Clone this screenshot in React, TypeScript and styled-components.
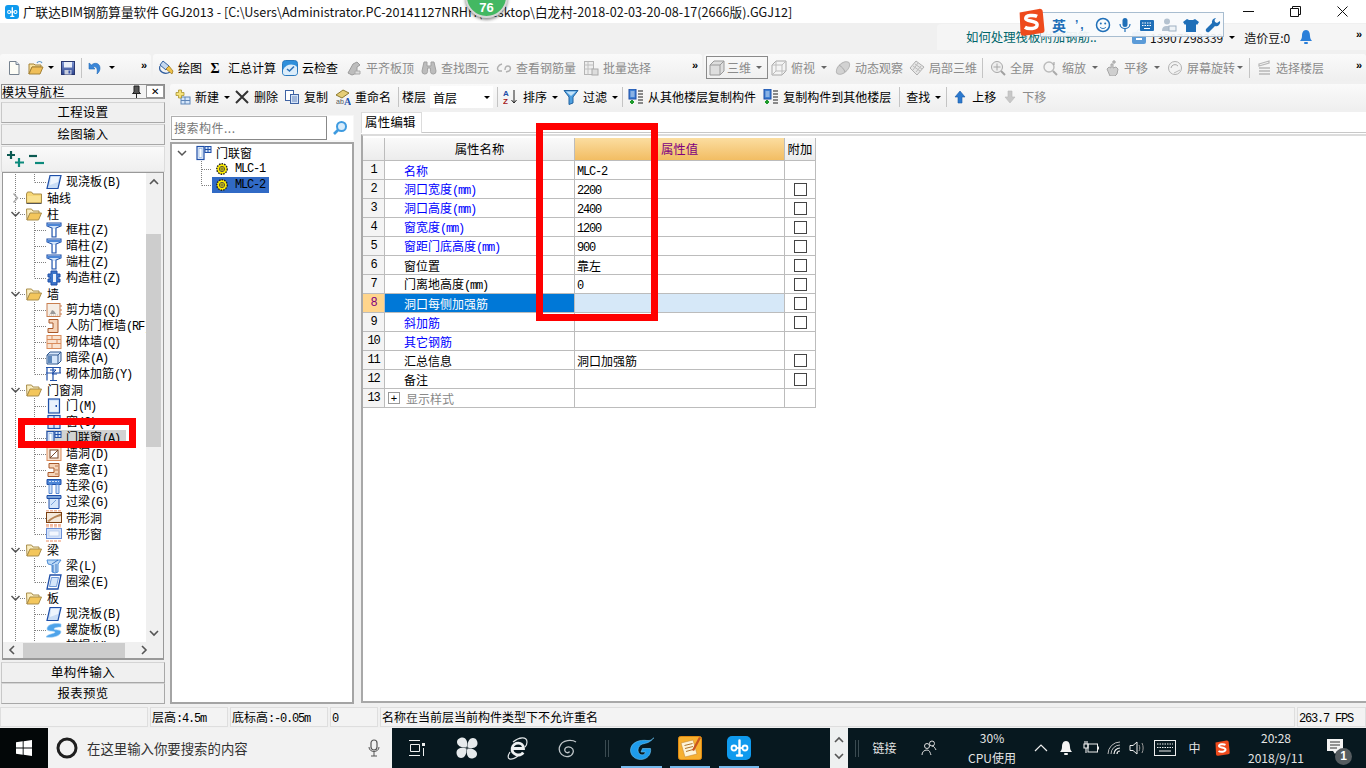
import React from "react";
import styled, { createGlobalStyle } from "styled-components";

const GlobalStyle = createGlobalStyle`
  html, body { margin: 0; padding: 0; width: 1366px; height: 768px; overflow: hidden; background: #f0f0f0; }
  * { box-sizing: border-box; }
  body { font-family: "Noto Sans CJK SC", "Liberation Sans", sans-serif; font-size: 12px; color: #000; }
`;

const Page = styled.div`
  position: relative; width: 1366px; height: 768px; display: flex; flex-direction: column; overflow: hidden;
`;
const TitleBar = styled.div`
  height: 23px; background: #fff; display: flex; align-items: center; padding-left: 5px; flex: none;
`;
const TitleText = styled.div`
  margin-left: 4px; font-size: 12.64px; white-space: nowrap; flex: 1; color: #111; line-height: 23px;
`;
const WinBtn = styled.div`
  width: 46px; height: 23px; display: flex; align-items: center; justify-content: center; flex: none; margin-right: 1px;
`;
const MenuBand = styled.div`
  height: 31px; flex: none; display: flex; justify-content: flex-end; padding-top: 1px;
`;
const InfoPanel = styled.div`
  width: 429px; height: 26px; background: #f5f5f5; border-radius: 4px 0 0 0; display: flex; align-items: center; padding-left: 29px;
`;
const InfoLink = styled.span`color: #00666b; font-size: 12.4px; width: 165px; white-space: nowrap; overflow: hidden;`;
const InfoText = styled.span<{ $ml?: number }>`font-size: 12px; white-space: nowrap; margin-left: ${(p) => p.$ml ?? 0}px; color: #111;`;
const ToolRow = styled.div`
  height: 27px; flex: none; display: flex; gap: 2px;
`;
const ToolPanel = styled.div<{ $w?: number; $pl?: number }>`
  ${(p) => (p.$w ? `width:${p.$w}px; flex:none;` : "flex:1;")}
  padding-left: ${(p) => p.$pl ?? 0}px;
  background: linear-gradient(#fafafa, #efefef); border-radius: 3px; display: flex; align-items: center; height: 27px;
`;
const Tool = styled.div<{ $off?: boolean; $ml?: number }>`
  display: flex; align-items: center; gap: 4px; padding: 0 3px; height: 22px; flex: none; white-space: nowrap;
  margin-left: ${(p) => p.$ml ?? 0}px;
  color: ${(p) => (p.$off ? "#8b8b8b" : "#000")};
  line-height: 22px;
`;
const BoxedTool = styled(Tool)`
  border: 1px solid #8a8a8a; height: 23px; width: 62px; padding: 0 2px; gap: 2px;
`;
const Caret = styled.span<{ $ml?: number; $off?: boolean }>`
  display: inline-block; width: 0; height: 0; border-left: 3px solid transparent; border-right: 3px solid transparent;
  border-top: 3px solid ${(p) => (p.$off ? "#666" : "#000")}; margin-left: ${(p) => p.$ml ?? 2}px; flex: none;
`;
const Sep = styled.span<{ $ml?: number; $mr?: number }>`
  width: 1px; height: 20px; background: #c4c4c4; flex: none; margin: 0 ${(p) => p.$mr ?? 3}px 0 ${(p) => p.$ml ?? 3}px;
`;
const More = styled.span<{ $ml?: string }>`
  margin-left: ${(p) => p.$ml ?? "auto"}; margin-right: 4px; margin-bottom: 6px; font: bold 11px "Liberation Sans", sans-serif; line-height: 12px; flex: none;
`;
const Work = styled.div`flex: 1; display: flex; min-height: 0;`;
const LeftPane = styled.div`
  width: 166px; flex: none; padding: 3px 0 0 0; display: flex; flex-direction: column;
`;
const DockHead = styled.div`
  height: 15px; margin: 0 1px; border: 1px solid #8c8c8c; border-bottom-color: #999; background: #f3f3f3; display: flex; align-items: center;
  font-size: 12px; line-height: 13px; letter-spacing: 0.6px; gap: 4px;
`;
const DockTitle = styled.span`flex: 1; white-space: nowrap;`;
const DockClose = styled.span`
  width: 18px; height: 13px; border: 1px solid #999; background: #fff; font: 10px "Liberation Sans", sans-serif; text-align: center; line-height: 11px;
`;
const NavBtn = styled.div<{ $mt?: number }>`
  height: 21px; margin: ${(p) => p.$mt ?? 1}px 1px 0 1px; flex: none; background: #f0f0f0; border: 1px solid #a8a8a8; border-left-color: #c8c8c8; border-top-color: #d4d4d4;
  text-align: center; line-height: 19px; font-size: 12.4px; letter-spacing: 0.4px;
`;
const ExpandBand = styled.div`
  height: 26px; flex: none; margin: 1px 1px 0 1px; background: linear-gradient(#fafafa, #efefef); border: 1px solid #dcdcdc; display: flex; align-items: center; gap: 3px; padding-left: 5px;
`;
const TreeBox = styled.div`
  flex: none; height: 488px; margin: 0 2px; border: 1px solid #999; border-bottom-width: 2px; display: flex; flex-direction: column; background: #f0f0f0;
`;
const TreeTop = styled.div`flex: 1; display: flex; min-height: 0;`;
const TreeView = styled.div`
  width: 143px; flex: none; background: #fff; overflow: hidden; padding-top: 1px;
`;
const TreeRowBox = styled.div`height: 16px; display: flex; align-items: center; white-space: nowrap; flex: none;`;
const RowLabel = styled.div<{ $sel?: boolean; $l0?: boolean }>`
  display: flex; align-items: center; gap: ${(p) => (p.$l0 ? 5 : 4)}px; height: 16px; padding-right: 6px; line-height: 16px;
  background: ${(p) => (p.$sel ? "#d2d2d2" : "transparent")};
`;
const VScroll = styled.div`width: 16px; flex: none; display: flex; flex-direction: column; background: #f0f0f0;`;
const VThumb = styled.div`width: 15px; height: 213px; margin-top: 44px; background: #cdcdcd; flex: none;`;
const VSpace = styled.div`flex: 1;`;
const ScrollArrow = styled.div`height: 17px; flex: none; display: flex; align-items: center; justify-content: center;`;
const HScroll = styled.div`height: 16px; flex: none; display: flex; align-items: center; background: #f0f0f0;`;
const HThumb = styled.div`width: 102px; height: 15px; background: #cdcdcd; flex: none; margin-left: 3px;`;
const HArrow = styled.div`width: 17px; height: 15px; display: flex; align-items: center; justify-content: center; flex: none;`;
const RightCol = styled.div`flex: 1; min-width: 0; display: flex; flex-direction: column; padding: 3px 0 0 4px;`;
const Toolbar2 = styled.div`
  height: 26px; flex: none; background: linear-gradient(#fafafa, #efefef); display: flex; align-items: center; padding-left: 2px; border-radius: 3px 0 0 0;
`;
const Combo = styled.div`
  width: 63px; height: 22px; background: #fff; margin-left: 1px; display: flex; align-items: center; padding-left: 3px; justify-content: space-between; padding-right: 3px;
`;
const Body = styled.div`flex: 1; display: flex; min-height: 0; padding-top: 2px;`;
const CompPane = styled.div`
  width: 184px; flex: none; margin-top: 3px; display: flex; flex-direction: column; background: #f7f7f7; height: 589px;
`;
const SearchRow = styled.div`height: 27px; flex: none; display: flex; align-items: center; padding: 0 0 1px 1px;`;
const SearchInput = styled.div`
  width: 156px; height: 24px; background: #fff; border: 1px solid #b0b0b0; border-right-color: #888; border-bottom-color: #888; color: #777; padding-left: 2px; line-height: 21px; letter-spacing: .5px;
`;
const SearchBtn = styled.div`width: 26px; height: 24px; background: #fff; display: flex; align-items: center; justify-content: center;`;
const CompTree = styled.div`
  flex: 1; background: #fff; border: 2px solid #a4a4a4; padding: 1px 0 0 0;
`;
const CompRow = styled.div`
  height: 16px; display: flex; align-items: center; white-space: nowrap;
`;
const CompLabel = styled.div<{ $sel?: boolean; $gap?: number }>`
  display: flex; align-items: center; gap: ${(p) => p.$gap ?? 4}px; height: 16px; padding: 0 4px 0 3px; line-height: 16px;
  background: ${(p) => (p.$sel ? "#316ac5" : "transparent")};
`;
const PropPane = styled.div`
  flex: 1; min-width: 0; margin-left: 7px; background: #fff; display: flex; flex-direction: column; height: 591px; border-left: 2px solid transparent;
`;
const TabStrip = styled.div`height: 21px; flex: none; display: flex; border-bottom: 1px solid #c8c8c8; margin-left: -2px;`;
const Tab = styled.div`
  width: 61px; height: 21px; background: #fff; border: 1px solid #dcdcdc; border-bottom: 0; padding-left: 3px; line-height: 19px; font-size: 12.4px; letter-spacing: .3px;
`;
const GridFrame = styled.div`
  flex: 1; margin: 1px 0 0 -2px; border: 2px solid #a8a8a8; border-right: 0; border-top: 2px solid #dcdcdc; padding-top: 2px; background: #fff;
`;
const GridRow = styled.div<{ $head?: boolean }>`
  display: grid; grid-template-columns: 22px 190px 210px 31px; width: 453px; height: ${(p) => (p.$head ? 23 : 19)}px;
`;
const Cell = styled.div<{ $bg?: string; $c?: string; $center?: boolean; $pl?: number; $head?: boolean }>`
  height: 100%; border-right: 1px solid #bcbcbc; border-bottom: 1px solid #bcbcbc; display: flex; align-items: center; white-space: nowrap;
  background: ${(p) => p.$bg ?? "#fff"}; color: ${(p) => p.$c ?? "#000"};
  justify-content: ${(p) => (p.$center ? "center" : "flex-start")}; padding-left: ${(p) => p.$pl ?? 0}px;
  ${(p) => (p.$head ? "font-size:12.4px;" : "")}
`;
const Check = styled.span`width: 13px; height: 13px; border: 1px solid #444; background: #fff; display: block;`;
const PlusBox = styled.span`
  width: 12px; height: 12px; border: 1px solid #999; margin-right: 6px; margin-left: 3px; font: 11px/10px "Liberation Sans", sans-serif; text-align: center; color: #000; flex: none;
`;
const StatusBar = styled.div`height: 21px; flex: none; display: flex; gap: 2px; background: #f0f0f0;`;
const StatusCell = styled.div<{ $w?: number }>`
  ${(p) => (p.$w ? `width:${p.$w}px; flex:none;` : "flex:1;")} height: 20px; background: #f3f3f3; border: 1px solid #dedede; padding-left: 1px; line-height: 18px; white-space: nowrap;
`;
const Taskbar = styled.div`height: 40px; flex: none; background: #07181f; display: flex; color: #e4e4e4;`;
const StartBtn = styled.div`width: 48px; background: #030708; display: flex; align-items: center; justify-content: center;`;
const SearchBar = styled.div`
  width: 344px; background: #f2f2f2; color: #333; display: flex; align-items: center; padding: 0 12px 0 8px; font-size: 13.4px; gap: 9px;
`;
const SearchLabel = styled.span`flex: 1;`;
const TaskSlot = styled.div<{ $w?: number; $active?: boolean }>`
  width: ${(p) => p.$w ?? 50}px; flex: none; display: flex; align-items: center; justify-content: center; height: 40px;
  border-bottom: 2px solid ${(p) => (p.$active ? "#76b9ed" : "transparent")}; padding-top: 2px;
`;
const Divider = styled.span`width: 4px; height: 17px; border-left: 1px solid #3a4a50; border-right: 1px solid #3a4a50;`;
const Tray = styled.div`margin-left: auto; display: flex; height: 40px;`;
const TrayItem = styled.div<{ $w: number }>`
  width: ${(p) => p.$w}px; flex: none; display: flex; flex-direction: column; align-items: center; justify-content: center; font-size: 12px; line-height: 20px; white-space: nowrap;
`;
const TrayScroll = styled(TrayItem)`background: #eef0f0; justify-content: space-around; padding: 3px 0;`;
const NotifWrap = styled.div`position: relative; width: 18px; height: 18px; margin-left: -8px;`;
const NotifBadge = styled.span`
  position: absolute; left: 8px; top: 9px; width: 17px; height: 17px; border-radius: 50%; background: #555c60; color: #fff; font: bold 12px/17px "Liberation Sans", sans-serif; text-align: center;
`;
const Latin = styled.span`font-family: "Liberation Mono", "DejaVu Sans Mono", monospace; font-size: 12px; letter-spacing: -1.2px;`;
const RedFrame = styled.div<{ $x: number; $y: number; $w: number; $h: number }>`
  position: absolute; left: ${(p) => p.$x}px; top: ${(p) => p.$y}px; width: ${(p) => p.$w}px; height: ${(p) => p.$h}px; border: 7px solid #ff0000;
`;
const Badge = styled.div`
  position: absolute; left: 465px; top: -25px; width: 43px; height: 43px; border-radius: 50%; background: #43b862;
  box-shadow: 0 2px 3px rgba(40,40,40,.5); color: #fff; font: bold 13px "Liberation Sans", sans-serif; text-align: center; padding-top: 23px; line-height: 15px; border: 2px solid #d6d6d6;
`;
const ImeBar = styled.div`
  position: absolute; left: 1040px; top: 12px; width: 184px; height: 25px; background: rgba(247,250,252,.93); border: 1px solid #a8bdd0; display: flex; align-items: center; gap: 6px; padding-left: 11px;
`;
const ImeLogo = styled.div`position: absolute; left: 1017px; top: 8px; width: 28px; height: 28px;`;
const ImeZh = styled.span`color: #1f6fb8; font-weight: 700; font-size: 14px; width: 14px; line-height: 20px;`;
const ImeDot = styled.span`color: #1f6fb8; font: bold 12px "Liberation Sans", sans-serif; width: 17px; letter-spacing: 2px; padding-left: 3px;`;

const Svg = styled.svg`display: block; flex: none;`;
const S16: React.FC<{ children: React.ReactNode; w?: number; h?: number }> = ({ children, w = 16, h = 16 }) => (
  <Svg width={w} height={h} viewBox={`0 0 ${w} ${h}`}>{children}</Svg>
);

/* ---- tree icons ---- */
const Plate = () => <S16><path d="M4 1.5h11l-3 13H1z" fill="#c9ddf6" stroke="#1e4fa8" strokeWidth="1.2" /><path d="M5 3h8l-1 5-8 3z" fill="#eef5fd" /></S16>;
const FolderClosed = () => <S16><path d="M.5 4V13h15V4H7L5.5 2h-4z" fill="#f6d675" stroke="#a98d4a" /><path d="M1.5 6h13v6h-13z" fill="#f9e08e" /><path d="M.5 13.5h15" stroke="#555" /></S16>;
const FolderOpen = () => <S16><path d="M.5 3h5L7 5h6v3H4L1 14z" fill="#fbeec0" stroke="#a98d4a" /><path d="M1 14l3-7h11.5l-3 7z" fill="#f3c65c" stroke="#a98d4a" /></S16>;
const ColumnT = () => <S16><path d="M1 1h14v3L10 6v9H6V6L1 4z" fill="#d5e6fa" stroke="#1e4fa8" strokeWidth="1.1" /><path d="M1 3h14" stroke="#4d86d6" strokeWidth="2" /><path d="M7 7h2v7H7z" fill="#fff" /></S16>;
const ConsCol = () => <S16><path d="M5 1h6v3h3v3h-2v2h2v3h-3v3H5v-3H2V9h2V7H2V4h3z" fill="#3b74c8" stroke="#1e4fa8" /><path d="M7 4h3v8H7z" fill="#e8f0fb" /></S16>;
const Shear = () => <S16><rect x="1" y="1.5" width="13" height="13" fill="#f5eee6" stroke="#c97f50" /><path d="M14 4h2M14 8h2M14 12h2" stroke="#c97f50" /><path d="M4 12l2-4 2 1 2 3z" fill="#999" /><path d="M3 13h9" stroke="#bbb" strokeDasharray="1 1" /></S16>;
const FrameWall = () => <S16><path d="M3 1.5h9v13H2v-4h5V5H3z" fill="#f6d4b8" stroke="#a8582a" /></S16>;
const Brick = () => <S16><rect x="1" y="1.5" width="14" height="13" fill="#f9e3d0" stroke="#d98c5c" /><path d="M1 5.5h14M1 9.5h14M6 1.5v4M11 5.5v4M6 9.5v5" stroke="#d98c5c" /></S16>;
const HiddenBeam = () => <S16><path d="M1 5l3-3h11v9l-3 3H1z" fill="#d5e6fa" stroke="#30588f" /><path d="M1 5h11v9M12 5l3-3" stroke="#30588f" fill="none" /><rect x="2" y="6" width="4" height="7" fill="#5e88bb" /></S16>;
const Rebar = () => <S16><path d="M0 1.5h15M1 1.5v13M0 7h15M7 1.5v13M14 1.5v6M4 14.5h7" stroke="#1e4fa8" strokeWidth="1.2" fill="none" /><path d="M4 4h6l-4 4h5" stroke="#1e4fa8" fill="none" /></S16>;
const Door = () => <S16><rect x="2.5" y="1" width="11" height="14" fill="#d5e6fa" stroke="#1e4fa8" strokeWidth="1.2" /><rect x="4" y="3" width="8" height="10.5" fill="#eaf2fc" /><rect x="9.5" y="7" width="1.5" height="2" fill="#1e4fa8" /></S16>;
const Win = () => <S16><rect x="2" y="1.5" width="12" height="13" fill="#d5e6fa" stroke="#1e4fa8" strokeWidth="1.2" /><path d="M8 1.5v13M2 8h12" stroke="#1e4fa8" /></S16>;
const DoorWin = () => <S16><rect x="1" y="1.5" width="7" height="13" fill="#e8f1fc" stroke="#1e4fa8" strokeWidth="1.2" /><rect x="3" y="3.5" width="3" height="9" fill="#fff" stroke="#7ba4da" strokeWidth=".6" /><rect x="9" y="1.5" width="6" height="6" fill="#d5e6fa" stroke="#1e4fa8" /><path d="M12 1.5v6M9 4.5h6" stroke="#1e4fa8" /></S16>;
const WallHole = () => <S16><rect x="1" y="1.5" width="14" height="13" fill="#f9e3d0" stroke="#d98c5c" /><rect x="4" y="4" width="8" height="8" fill="#fff" stroke="#7a4a2a" /><path d="M4 12l8-8" stroke="#7a4a2a" /></S16>;
const Niche = () => <S16><path d="M3 1.5h10v13H2v-4h6V6H3z" fill="#f6d4b8" stroke="#a8582a" /><path d="M9 4h3M9 8h3M9 12h3" stroke="#a8582a" strokeWidth=".7" /></S16>;
const LinkBeam = () => <S16><path d="M1 1.5h14v5H1z" fill="#4d86d6" stroke="#1e4fa8" /><path d="M3 3.5h10" stroke="#cfe2fa" strokeDasharray="2 1" strokeWidth="1.2" /><path d="M3 6.5h3v9H3zM10 6.5h3v9h-3z" fill="#cfe2fa" stroke="#3b74c8" strokeWidth=".8" /></S16>;
const Lintel = () => <S16><path d="M1 1.5h14v3H1z" fill="#7ba4da" stroke="#1e4fa8" /><path d="M3 4.5h10v10H3z" fill="#d5e6fa" stroke="#1e4fa8" /><path d="M5 11l5-5" stroke="#7ba4da" /></S16>;
const BandHole = () => <S16><path d="M0 .5h16M0 15h16" stroke="#f2b9a0" strokeWidth="2" strokeDasharray="3 1" /><rect x=".5" y="2.5" width="15" height="10" fill="#f4e9dc" stroke="#7a3f10" /><path d="M1 11C6 7 11 5 15 3.5V6C10 7 6 9 3 12z" fill="#b88556" /></S16>;
const BandWin = () => <S16><path d="M0 .5h16M0 15h16" stroke="#f6c6b0" strokeWidth="2" strokeDasharray="3 1" /><rect x=".5" y="2.5" width="15" height="10" fill="#d5e3fa" stroke="#6c8fd6" /><rect x="3" y="5" width="10" height="5" fill="#f2f6fd" stroke="#a6bfe8" strokeWidth=".6" /></S16>;
const BeamL = () => <S16><path d="M1 2h14l-3 4v8l-3 1-3-1V7L2 6z" fill="#bcd9f6" stroke="#4d8ed6" /><path d="M6 6l6-4M7 7v7M10 6v8" stroke="#1e5fb8" strokeWidth=".8" /></S16>;
const Ring = () => <S16><path d="M4 1h11l-3 14H1z" fill="#fff" stroke="#1e4fa8" strokeWidth="1.3" /><path d="M5.5 3.5h7l-2 9h-7z" fill="#d5e6fa" stroke="#3b74c8" strokeWidth=".7" /></S16>;
const Spiral = () => <S16><path d="M15 2C7 .5 1 3 1 7c0 3 7 1.5 8 3S1 12 0 15c6 1 14-.5 15-5 0-3-7-1.5-7-3s4-2 7-2z" fill="#4ea3ea" stroke="#9fd0f7" strokeWidth=".6" /></S16>;
const Blank = () => <S16><rect x="2" y="6" width="12" height="10" fill="#d5e6fa" stroke="#1e4fa8" /></S16>;
const Gear = () => <S16 w={14} h={14}><circle cx="7" cy="7" r="5.2" fill="#ffee00" stroke="#222" strokeWidth="1.4" strokeDasharray="1.6 1" /><circle cx="7" cy="7" r="2.6" fill="#ffee00" stroke="#444" strokeWidth=".9" /><path d="M7 4.5v5M4.5 7h5" stroke="#444" strokeWidth=".7" /></S16>;

/* ---- toolbar icons ---- */
const NewDoc = () => <S16><path d="M3.5 1.5h6.5l3 3v10H3.5z" fill="#fdfdf6" stroke="#76828f" /><path d="M10 1.5v3h3" fill="#dbe5f0" stroke="#76828f" /></S16>;
const OpenF = () => <S16><path d="M1 4h5l1 1h6v2H4L1 14z" fill="#f9e2a0" stroke="#a58236" /><path d="M1 14l3-7h11l-3 7z" fill="#f0bf59" stroke="#a58236" /><path d="M9 3c1-2 4-2 5 0" stroke="#5e97c9" strokeWidth="1.2" fill="none" /></S16>;
const Save = () => <S16><defs><linearGradient id="sv" x1="0" y1="0" x2="0" y2="1"><stop offset="0" stopColor="#7f97d6" /><stop offset="1" stopColor="#2f468f" /></linearGradient></defs><rect x="1.5" y="1.5" width="13" height="13" fill="url(#sv)" stroke="#2a3870" /><rect x="4" y="2" width="8" height="5.5" fill="#e9eef8" /><rect x="4.5" y="10" width="7" height="4.5" fill="#c8cedd" /><rect x="8.5" y="10.5" width="1.8" height="3" fill="#3752a8" /></S16>;
const Undo = () => <S16><path d="M2 3v6h6L6 7c3-1 5 1 4 7 4-3 4-9 0-10.5C8 3 6 3.5 4.5 5z" fill="#3a86d8" stroke="#246cb8" strokeWidth=".6" /></S16>;
const Draw = () => <S16><path d="M2 5l3-4 6 5-3 4z" fill="#c5d8ef" stroke="#33609f" /><path d="M2 6c-2 6 5 9 10 6" stroke="#33609f" strokeWidth="1.2" fill="none" /><path d="M8 9l3-3 4 5-1 3z" fill="#f0c24a" stroke="#946f13" strokeWidth=".7" /></S16>;
const Sigma = () => <S16><text x="2.5" y="13" fontFamily="Liberation Serif, serif" fontWeight="700" fontSize="14" fill="#000">Σ</text></S16>;
const Cloud = () => <S16><rect x=".5" y=".5" width="15" height="15" rx="3" fill="#2e8fdb" stroke="#2a78bc" /><path d="M1 10c3-6 10-7 14-3v6c0 1-1 2-2 2H3c-1 0-2-1-2-2z" fill="#dcedfa" /><path d="M5 9l2.5 2L12 6.5" stroke="#2e74ba" strokeWidth="1.6" fill="none" /></S16>;
const G1 = () => <S16><path d="M2 13l5-9 4-2 3 3-3 2v6l-5 2z" fill="#bdbdbd" stroke="#9b9b9b" /><path d="M9 11h5v3H9z" fill="#dcdcdc" stroke="#aaa" /></S16>;
const Binoc = () => <S16><path d="M3 2h3v4h4V2h3l2 9a2.8 2.8 0 0 1-5.6.5V8H6.6v3.5A2.8 2.8 0 0 1 1 11z" fill="#bcbcbc" stroke="#a2a2a2" /></S16>;
const G3 = () => <S16><path d="M6 4C2 5 0 9 3 11h3M10 12l3-1c2-1 2-5-1-5s-3 2-3 4" stroke="#b0b0b0" strokeWidth="1.4" fill="none" /></S16>;
const G4 = () => <S16><rect x="1.5" y="1.5" width="9" height="13" fill="#eee" stroke="#b5b5b5" /><path d="M1.5 5h9M1.5 9h9M5 1.5v13" stroke="#c0c0c0" /><rect x="9" y="9" width="6" height="6" fill="#ddd" stroke="#aaa" /></S16>;
const Cube = () => <S16><path d="M1 5l4-4h10v10l-4 4H1z" fill="#dedede" stroke="#9a9a9a" /><path d="M1 5h10v10M11 5l4-4" stroke="#9a9a9a" fill="none" /></S16>;
const CubeO = () => <S16><path d="M1 5l4-4h10v10l-4 4H1z" fill="#f4f4f4" stroke="#a8a8a8" /><path d="M1 5h10v10M11 5l4-4M5 1v10h10M5 11l-4 4" stroke="#bdbdbd" fill="none" /></S16>;
const Orbit = () => <S16><ellipse cx="8" cy="8" rx="8" ry="4.5" transform="rotate(-42 8 8)" fill="#d2d2d2" stroke="#b8b8b8" /><path d="M4 5c3 2 5 4 6 7" stroke="#aaa" fill="none" /></S16>;
const Loc3d = () => <S16><path d="M7 1l8 6-7 8-7-7z" fill="#e6e6e6" stroke="#b0b0b0" /><path d="M4 6l7 5M6 4l7 5M9 3l-5 7M12 6l-5 6" stroke="#bdbdbd" /></S16>;
const Zoomf = () => <S16><circle cx="7" cy="7" r="5.5" fill="#eee" stroke="#a8a8a8" /><path d="M3.5 7h7M7 3.5v7" stroke="#a8a8a8" /><path d="M11 11l4 4" stroke="#a0a0a0" strokeWidth="2" /></S16>;
const ZoomS = () => <S16><circle cx="7" cy="7" r="5" fill="#f4f4f4" stroke="#bbb" strokeWidth="1.4" /><path d="M11 11l4 4" stroke="#aaa" strokeWidth="2" /><path d="M12 2v3" stroke="#999" /></S16>;
const Pan = () => <S16><path d="M3 9l2-2 2 1V4l2 0v4l3-1 2 2-1 5-2 2H6z" fill="#cfcfcf" stroke="#a6a6a6" /><path d="M10 0v4M8 2h4" stroke="#999" /></S16>;
const Rot = () => <S16><circle cx="8" cy="8" r="6.5" fill="#f3f3f3" stroke="#b2b2b2" /><path d="M4 8a4 4 0 0 1 7-2" stroke="#aaa" fill="none" /><path d="M7 13l6-3" stroke="#bbb" /></S16>;
const Layers = () => <S16><path d="M3 4l10-3v2L3 6zM3 8h11M3 11h11M3 14h11" stroke="#b8b8b8" strokeWidth="1.3" fill="none" /></S16>;
const NewC = () => <S16><rect x="6" y="8" width="9" height="7" fill="#d5e6fa" stroke="#5f86b8" /><path d="M6 11.5h9M10 8v7" stroke="#5f86b8" /><path d="M3.5 1h3v2.5H9v3H6.5V9h-3V6.5H1v-3h2.5z" fill="#f6e27a" stroke="#a08a20" strokeWidth=".7" /></S16>;
const Cross = () => <S16><path d="M2 2l12 12M14 2L2 14" stroke="#333" strokeWidth="2" /></S16>;
const Copy = () => <S16><rect x="1.5" y="1.5" width="8" height="10" fill="#fff" stroke="#3f63a3" /><rect x="6.5" y="5.5" width="8" height="9" fill="#d5e4f7" stroke="#3f63a3" /><path d="M8 8h5M8 10h5M8 12h5" stroke="#3f63a3" strokeWidth=".7" /></S16>;
const Rename = () => <S16><path d="M1 6l7-5 6 3-7 5z" fill="#e5cd76" stroke="#8e7a2f" /><text x="1" y="15" fontSize="7" fontFamily="Liberation Sans" fill="#555">ab</text><text x="9" y="15.5" fontSize="10" fontWeight="700" fontFamily="Liberation Serif" fill="#1e4fa8">A</text></S16>;
const SortI = () => <S16><text x="0" y="7" fontSize="8" fontWeight="700" fontFamily="Liberation Sans" fill="#1f4fa8">A</text><text x="0" y="15" fontSize="8" fontWeight="700" fontFamily="Liberation Sans" fill="#a52020">Z</text><path d="M11 1v13M8.5 11l2.5 3 2.5-3" stroke="#222" fill="none" /></S16>;
const Filter = () => <S16><path d="M1 1.5h14L10 8v6l-4 1.5V8z" fill="#4d9fe0" stroke="#23639f" /><path d="M3 2.5h10L8 7z" fill="#c3e2f8" /></S16>;
const CopyIn = () => <S16><rect x="1" y="0" width="7" height="10" fill="#3d7fd3" stroke="#1e4fa8" /><path d="M2.5 3h4M2.5 5h4M2.5 7h4" stroke="#fff" strokeWidth=".8" /><path d="M4 11v4M2 13h4" stroke="#1e9b2c" strokeWidth="2" /><path d="M10 2h5M10 5h5M10 8h5M10 11h5M10 14h5" stroke="#666" strokeWidth="1.3" /></S16>;
const Up = () => <S16><path d="M8 2l5 6h-3v6H6V8H3z" fill="#2b79cf" stroke="#1b5aa6" strokeWidth=".6" /></S16>;
const Down = () => <S16><path d="M8 14l5-6h-3V2H6v6H3z" fill="#c8c8c8" stroke="#b8b8b8" strokeWidth=".6" /></S16>;
const PlusTree = () => <S16 w={18} h={18}><path d="M4 1v8M0 5h8" stroke="#0c5a52" strokeWidth="2.2" /><path d="M12 8v9M8 12.5h9" stroke="#0c8a7c" strokeWidth="2.2" /></S16>;
const MinusTree = () => <S16 w={18} h={18}><path d="M1 6h8" stroke="#0c5a52" strokeWidth="2.2" /><path d="M7 13h9" stroke="#0c8a7c" strokeWidth="2.2" /></S16>;
const Pin = () => <S16 w={11} h={13}><path d="M3 1h5v6l1.5 1.5h-8L3 7zM5.5 8.5V13" stroke="#222" fill="#555" strokeWidth="1" /></S16>;
const Magnify = () => <S16><circle cx="9.5" cy="6.5" r="4.5" fill="#d8ecfb" stroke="#3f9be0" strokeWidth="2" /><path d="M6 10l-4 4" stroke="#3f9be0" strokeWidth="2.6" /></S16>;
const ComboCaret = () => <Caret $ml={0} />;

/* ---- taskbar icons ---- */
const AppIcon: React.FC<{ s?: number }> = ({ s = 14 }) => (
  <Svg width={s} height={s} viewBox="0 0 24 24"><rect width="24" height="24" rx="5" fill="#0f9aee" /><path d="M12.5 4.5v15M10 19.5h5" stroke="#fff" strokeWidth="2.4" fill="none" strokeLinecap="round" /><circle cx="7" cy="12" r="2.5" fill="none" stroke="#fff" strokeWidth="1.8" /><circle cx="18" cy="12" r="2.5" fill="none" stroke="#fff" strokeWidth="1.8" /><path d="M9.5 12h6" stroke="#fff" strokeWidth="1.8" /></Svg>
);
const WinLogo = () => <S16><path d="M0 2.2l6.7-.9v6.3H0zM7.6 1.2L16 0v7.6H7.6zM0 8.5h6.7v6.3L0 13.8zM7.6 8.5H16V16l-8.4-1.2z" fill="#fff" /></S16>;
const Cortana = () => <Svg width={22} height={22} viewBox="0 0 22 22"><circle cx="11" cy="11" r="9" fill="none" stroke="#1f1f1f" strokeWidth="3" /></Svg>;
const MicI: React.FC<{ c?: string }> = ({ c = "#555" }) => <Svg width={12} height={18} viewBox="0 0 12 18"><rect x="3" y="1" width="6" height="10" rx="3" fill="none" stroke={c} strokeWidth="1.2" /><path d="M1 8c0 6 10 6 10 0M6 13v4M3 17h6" stroke={c} fill="none" /></Svg>;
const TaskView = () => <Svg width={16} height={16} viewBox="0 0 16 16"><path d="M0 .5h11M0 15.5h11M1.5 4.5h9v7h-9z" stroke="#eef0f0" fill="none" /><rect x="13" y="3" width="3" height="3" fill="#eef0f0" /><path d="M14.5 8v8" stroke="#eef0f0" /></Svg>;
const FanBlade = "M10.5 10.500C6 11 1 9 1 5 1 2 4 .5 6.500 .5 10 .5 12.500 5 10.500 10.500z";
const Fan = () => <Svg width={22} height={22} viewBox="0 0 22 22">{[0, 90, 180, 270].map((a) => <path key={a} d={FanBlade} fill="#e6eaec" transform={`rotate(${a} 11 11)`} />)}</Svg>;
const IE = () => <Svg width={21} height={23} viewBox="0 0 21 23"><path d="M5.5 11.500h11c0-7-10-7-11.300-.5-1 7 8 9 11 4.500" fill="none" stroke="#eef1f2" strokeWidth="2.8" /><path d="M3 15c-5 8 1 9 8 4M6 5c6-5 14-6 14 0 0 2-1 4-2 5" fill="none" stroke="#dfe3e5" strokeWidth="1.2" /></Svg>;
const Swirl = () => <Svg width={19} height={19} viewBox="0 0 19 19"><path d="M18 3C15 1 4-.5 1.500 8c-1.500 6 4 10.500 9 9.500s6.500-7 2.500-9-7 1-6 3.500 4 2 4.500.5" stroke="#bfc5c8" strokeWidth="1.3" fill="none" /></Svg>;
const BlueG = () => <Svg width={24} height={24} viewBox="0 0 24 24"><path d="M24 1.500c-2 3-4 3-7 3C10 3.500 1 6 .5 14c0 6 5 9.500 10 9.500 7 0 11-5.500 10-11h-8l-1.500 3.500h4.500c-.5 2.500-3 3.500-5 2.500-4-2-3-9 2-10.500 4-1 7-1 11.500-6.500z" fill="#1e9cec" stroke="#6fc8f7" strokeWidth=".6" /></Svg>;
const NoteApp = () => <Svg width={24} height={24} viewBox="0 0 24 24"><rect x=".5" y=".5" width="23" height="23" rx="2" fill="#f7b02f" stroke="#e08a12" /><path d="M3 7l12-3 4 14-12 3z" fill="#fdf4d8" stroke="#c88a36" strokeWidth=".6" /><path d="M6.500 9.500l8-2M7 12.500l8-2M8 15.500l7-2" stroke="#a4651b" strokeWidth=".9" /><path d="M14 14L21 1l2 1-7 13z" fill="#c9551e" /></Svg>;
const BlueApp = () => <AppIcon s={24} />;
const People = () => <Svg width={16} height={16} viewBox="0 0 16 16"><circle cx="11" cy="3.5" r="2.5" fill="none" stroke="#ddd" /><circle cx="6" cy="6" r="2.5" fill="none" stroke="#ddd" /><path d="M1 15c0-3 2-5 5-5s3 3 4 5M11 6c2 0 3 2 4 4" stroke="#ddd" fill="none" /></Svg>;
const Chevron = () => <Svg width={14} height={8} viewBox="0 0 14 8"><path d="M1 7l6-6 6 6" stroke="#eee" strokeWidth="1.2" fill="none" /></Svg>;
const BellT: React.FC<{ c?: string; s?: number }> = ({ c = "#f4f4f4", s = 16 }) => <Svg width={s} height={s} viewBox="0 0 16 16"><path d="M8 1c3 0 4 3 4 6 0 2 1 4 2 5H2c1-1 2-3 2-5 0-3 1-6 4-6z" fill={c} /><rect x="6" y="13" width="4" height="2" rx="1" fill={c} /></Svg>;
const Plug = () => <Svg width={16} height={16} viewBox="0 0 16 16"><rect x="5" y="4" width="9.5" height="8" fill="none" stroke="#eee" /><rect x="14.5" y="6.5" width="1.5" height="3" fill="#eee" /><path d="M2 1v3M4 1v3M1 4h4v4H1zM3 8v5" stroke="#eee" strokeWidth="1.1" fill="none" /></Svg>;
const Wifi = () => <Svg width={16} height={16} viewBox="0 0 16 16"><path d="M2 14a12 12 0 0 1 12-12M5 14a9 9 0 0 1 9-9" stroke="#bbb" fill="none" /><path d="M8 14a6 6 0 0 1 6-6M11 14a3 3 0 0 1 3-3" stroke="#eee" fill="none" strokeWidth="1.2" /></Svg>;
const Speaker = () => <Svg width={16} height={16} viewBox="0 0 16 16"><path d="M1 5.5h3L8 2v12l-4-3.5H1z" fill="none" stroke="#eee" /><path d="M10 5c1 2 1 4 0 6M13 3c1.5 3 1.5 7 0 10" stroke="#999" fill="none" /></Svg>;
const Kbd = () => <Svg width={22} height={16} viewBox="0 0 22 16"><rect x=".5" y=".5" width="21" height="15" fill="none" stroke="#eee" /><path d="M3 4h16M3 7.500h16" stroke="#eee" strokeDasharray="1.5 1" /><path d="M5 11h12" stroke="#eee" /></Svg>;
const SgS: React.FC<{ s?: number }> = ({ s = 16 }) => <Svg width={s} height={s} viewBox="0 0 16 16"><path d="M1.500 2.500l11-2q2-.3 2.200 1.500l1 10.500q.2 1.500-1.500 1.800l-10 1.500q-2 .2-2.200-1.500z" fill="#ee4a1c" /><path d="M11.500 4.800c-2-1-6.500-.7-6.500 1.200s6.500 1 6.500 3.500-5 2.800-7 1.500" stroke="#fff" strokeWidth="2" fill="none" /></Svg>;
const Notif = () => <Svg width={16} height={16} viewBox="0 0 16 16"><path d="M0 0h16v12H10l-2 3-2-3H0z" fill="#f4f4f4" /><path d="M3 3h10M3 6h10M3 9h7" stroke="#333" /></Svg>;
const UpTri = () => <Svg width={10} height={7} viewBox="0 0 10 7"><path d="M1 6l4-4 4 4" stroke="#555" strokeWidth="1.6" fill="none" /></Svg>;
const DownTri = () => <Svg width={10} height={7} viewBox="0 0 10 7"><path d="M1 1l4 4 4-4" stroke="#555" strokeWidth="1.6" fill="none" /></Svg>;
const LeftTri = () => <Svg width={7} height={10} viewBox="0 0 7 10"><path d="M6 1L2 5l4 4" stroke="#555" strokeWidth="1.6" fill="none" /></Svg>;
const RightTri = () => <Svg width={7} height={10} viewBox="0 0 7 10"><path d="M1 1l4 4-4 4" stroke="#555" strokeWidth="1.6" fill="none" /></Svg>;

const Mx: React.FC<{ t: string }> = ({ t }) => (
  <>
    {t.split(/([\x20-\x7e]+)/).filter(Boolean).map((s, i) =>
      /^[\x20-\x7e]+$/.test(s) ? <Latin key={i}>{s}</Latin> : <span key={i}>{s}</span>
    )}
  </>
);

const dot = { stroke: "#808080", strokeDasharray: "1 1", fill: "none" } as const;

/* tree guide: dotted lines and the expander */
const Guide: React.FC<{ level: 0 | 1; last?: boolean; exp?: "open" | "closed" }> = ({ level, last, exp }) => {
  const w = level === 0 ? 23 : 43;
  return (
    <Svg width={w} height={16} viewBox={`0 0 ${w} 16`}>
      <path d="M12.5 0v16" {...dot} />
      {level === 0 && <path d="M17 8.5h6" {...dot} />}
      {level === 1 && <path d={last ? "M31.5 0v8.5M32 8.5h11" : "M31.5 0v16M32 8.5h11"} {...dot} />}
      {exp === "open" && <path d="M8.5 6l4 4 4-4" stroke="#555" strokeWidth="1.5" fill="none" />}
      {exp === "closed" && <path d="M10.5 3.5l4 4.5-4 4.5" stroke="#aaa" strokeWidth="1.5" fill="none" />}
    </Svg>
  );
};

type Row = { t: string; i: React.FC; l: 0 | 1; last?: boolean; exp?: "open" | "closed"; sel?: boolean };
const treeRows: Row[] = [
  { t: "现浇板(B)", i: Plate, l: 1, last: true },
  { t: "轴线", i: FolderClosed, l: 0, exp: "closed" },
  { t: "柱", i: FolderOpen, l: 0, exp: "open" },
  { t: "框柱(Z)", i: ColumnT, l: 1 },
  { t: "暗柱(Z)", i: ColumnT, l: 1 },
  { t: "端柱(Z)", i: ColumnT, l: 1 },
  { t: "构造柱(Z)", i: ConsCol, l: 1, last: true },
  { t: "墙", i: FolderOpen, l: 0, exp: "open" },
  { t: "剪力墙(Q)", i: Shear, l: 1 },
  { t: "人防门框墙(RF)", i: FrameWall, l: 1 },
  { t: "砌体墙(Q)", i: Brick, l: 1 },
  { t: "暗梁(A)", i: HiddenBeam, l: 1 },
  { t: "砌体加筋(Y)", i: Rebar, l: 1, last: true },
  { t: "门窗洞", i: FolderOpen, l: 0, exp: "open" },
  { t: "门(M)", i: Door, l: 1 },
  { t: "窗(C)", i: Win, l: 1 },
  { t: "门联窗(A)", i: DoorWin, l: 1, sel: true },
  { t: "墙洞(D)", i: WallHole, l: 1 },
  { t: "壁龛(I)", i: Niche, l: 1 },
  { t: "连梁(G)", i: LinkBeam, l: 1 },
  { t: "过梁(G)", i: Lintel, l: 1 },
  { t: "带形洞", i: BandHole, l: 1 },
  { t: "带形窗", i: BandWin, l: 1, last: true },
  { t: "梁", i: FolderOpen, l: 0, exp: "open" },
  { t: "梁(L)", i: BeamL, l: 1 },
  { t: "圈梁(E)", i: Ring, l: 1, last: true },
  { t: "板", i: FolderOpen, l: 0, exp: "open" },
  { t: "现浇板(B)", i: Plate, l: 1 },
  { t: "螺旋板(B)", i: Spiral, l: 1 },
  { t: "柱帽(V)", i: Blank, l: 1 },
];

type PRow = { n: number; name: string; blue?: boolean; val?: string; chk?: boolean; sel?: boolean; plus?: boolean };
const propRows: PRow[] = [
  { n: 1, name: "名称", blue: true, val: "MLC-2" },
  { n: 2, name: "洞口宽度(mm)", blue: true, val: "2200", chk: true },
  { n: 3, name: "洞口高度(mm)", blue: true, val: "2400", chk: true },
  { n: 4, name: "窗宽度(mm)", blue: true, val: "1200", chk: true },
  { n: 5, name: "窗距门底高度(mm)", blue: true, val: "900", chk: true },
  { n: 6, name: "窗位置", val: "靠左", chk: true },
  { n: 7, name: "门离地高度(mm)", val: "0", chk: true },
  { n: 8, name: "洞口每侧加强筋", sel: true, chk: true },
  { n: 9, name: "斜加筋", blue: true, chk: true },
  { n: 10, name: "其它钢筋", blue: true },
  { n: 11, name: "汇总信息", val: "洞口加强筋", chk: true },
  { n: 12, name: "备注", chk: true },
  { n: 13, name: "显示样式", plus: true },
];

export default function App() {
  return (
    <Page>
      <GlobalStyle />
      <TitleBar>
        <AppIcon />
        <TitleText>{"广联达BIM钢筋算量软件 GGJ2013 - [C:\\Users\\Administrator.PC-20141127NRHH\\Desktop\\白龙村-2018-02-03-20-08-17(2666版).GGJ12]"}</TitleText>
        <WinBtn><Svg width={11} height={11} viewBox="0 0 11 11"><path d="M0 5.5h11" stroke="#111" /></Svg></WinBtn>
        <WinBtn><Svg width={11} height={11} viewBox="0 0 11 11"><path d="M.5 2.500h8v8h-8zM2.500 2.500v-2h8v8h-2" stroke="#111" fill="none" /></Svg></WinBtn>
        <WinBtn><Svg width={11} height={11} viewBox="0 0 11 11"><path d="M.5.500l10 10M10.500.500l-10 10" stroke="#111" /></Svg></WinBtn>
      </TitleBar>
      <MenuBand>
        <InfoPanel>
          <InfoLink>如何处理筏板附加钢筋..</InfoLink>
          <S16><rect x="1" y="3" width="14" height="12" rx="2" fill="#5b9bd8" /><path d="M6 3c0-3 4-3 4 0M3 8h10" stroke="#5b9bd8" fill="none" /><rect x="5" y="9" width="6" height="2" fill="#fff" /></S16>
          <InfoText $ml={3}>13907298339</InfoText>
          <Caret $ml={6} />
          <InfoText $ml={9}>造价豆:0</InfoText>
          <InfoText $ml={8}><BellT c="#2b7fd9" /></InfoText>
          <More>»</More>
        </InfoPanel>
      </MenuBand>
      <ToolRow>
        <ToolPanel $w={151} $pl={3}>
          <Tool><NewDoc /></Tool>
          <Tool><OpenF /><Caret $ml={0} /></Tool>
          <Tool><Save /></Tool>
          <Sep $ml={2} $mr={2} />
          <Tool><Undo /><Caret $ml={2} /></Tool>
          <More>»</More>
        </ToolPanel>
        <ToolPanel $w={549} $pl={2}>
          <Tool><Draw /><span>绘图</span></Tool>
          <Tool><Sigma /><span>汇总计算</span></Tool>
          <Tool><Cloud /><span>云检查</span></Tool>
          <Tool $off $ml={2}><G1 /><span>平齐板顶</span></Tool>
          <Tool $off $ml={1}><Binoc /><span>查找图元</span></Tool>
          <Tool $off $ml={1}><G3 /><span>查看钢筋量</span></Tool>
          <Tool $off $ml={1}><G4 /><span>批量选择</span></Tool>
          <More>»</More>
        </ToolPanel>
        <ToolPanel $pl={2}>
          <BoxedTool $off><Cube /><span>三维</span><Caret $off $ml={3} /></BoxedTool>
          <Tool $off><CubeO /><span>俯视</span><Caret $off $ml={2} /></Tool>
          <Tool $off $ml={2}><Orbit /><span>动态观察</span></Tool>
          <Tool $off><Loc3d /><span>局部三维</span></Tool>
          <Sep $ml={2} $mr={4} />
          <Tool $off><Zoomf /><span>全屏</span></Tool>
          <Tool $off $ml={2}><ZoomS /><span>缩放</span><Caret $off $ml={2} /></Tool>
          <Tool $off $ml={0}><Pan /><span>平移</span><Caret $off $ml={2} /></Tool>
          <Tool $off $ml={1}><Rot /><span>屏幕旋转</span><Caret $off $ml={-2} /></Tool>
          <Sep $ml={3} $mr={3} />
          <Tool $off><Layers /><span>选择楼层</span></Tool>
          <More>»</More>
        </ToolPanel>
      </ToolRow>
      <Work>
        <LeftPane>
          <DockHead>
            <DockTitle>模块导航栏</DockTitle>
            <Pin />
            <DockClose>✕</DockClose>
          </DockHead>
          <NavBtn $mt={3}>工程设置</NavBtn>
          <NavBtn>绘图输入</NavBtn>
          <ExpandBand><PlusTree /><MinusTree /></ExpandBand>
          <TreeBox>
            <TreeTop>
              <TreeView>
                {treeRows.map((r, i) => (
                  <TreeRowBox key={i}>
                    <Guide level={r.l} last={r.last} exp={r.exp} />
                    <RowLabel $sel={r.sel} $l0={r.l === 0}>
                      <r.i />
                      <span><Mx t={r.t} /></span>
                    </RowLabel>
                  </TreeRowBox>
                ))}
              </TreeView>
              <VScroll>
                <ScrollArrow><UpTri /></ScrollArrow>
                <VThumb />
                <VSpace />
                <ScrollArrow><DownTri /></ScrollArrow>
              </VScroll>
            </TreeTop>
            <HScroll>
              <HArrow><LeftTri /></HArrow>
              <HThumb />
              <VSpace />
              <HArrow><RightTri /></HArrow>
              <VSpace />
            </HScroll>
          </TreeBox>
          <NavBtn $mt={2}>单构件输入</NavBtn>
          <NavBtn $mt={0}>报表预览</NavBtn>
        </LeftPane>
        <RightCol>
          <Toolbar2>
            <Tool><NewC /><span>新建</span><Caret $ml={1} /></Tool>
            <Tool $ml={-2}><Cross /><span>删除</span></Tool>
            <Tool><Copy /><span>复制</span></Tool>
            <Tool $ml={1}><Rename /><span>重命名</span></Tool>
            <Sep $ml={4} $mr={0} />
            <Tool><span>楼层</span></Tool>
            <Combo><span>首层</span><ComboCaret /></Combo>
            <Sep $ml={4} $mr={2} />
            <Tool><SortI /><span>排序</span><Caret $ml={1} /></Tool>
            <Tool $ml={-1}><Filter /><span>过滤</span><Caret $ml={1} /></Tool>
            <Sep $ml={1} $mr={2} />
            <Tool><CopyIn /><span>从其他楼层复制构件</span></Tool>
            <Tool $ml={1}><CopyIn /><span>复制构件到其他楼层</span></Tool>
            <Sep $ml={5} $mr={3} />
            <Tool><span>查找</span><Caret $ml={1} /></Tool>
            <Sep $ml={2} $mr={2} />
            <Tool><Up /><span>上移</span></Tool>
            <Tool $off><Down /><span>下移</span></Tool>
          </Toolbar2>
          <Body>
            <CompPane>
              <SearchRow>
                <SearchInput>搜索构件...</SearchInput>
                <SearchBtn><Magnify /></SearchBtn>
              </SearchRow>
              <CompTree>
                <CompRow>
                  <Svg width={21} height={16} viewBox="0 0 21 16"><path d="M6 6l4 4 4-4" stroke="#555" strokeWidth="1.5" fill="none" /></Svg>
                  <CompLabel><DoorWin /><span>门联窗</span></CompLabel>
                </CompRow>
                <CompRow>
                  <Svg width={40} height={16} viewBox="0 0 40 16"><path d="M29.5 0v16M30 8.500h10" {...dot} /></Svg>
                  <CompLabel $gap={6}><Gear /><Latin>MLC-1</Latin></CompLabel>
                </CompRow>
                <CompRow>
                  <Svg width={40} height={16} viewBox="0 0 40 16"><path d="M29.5 0v8.500M30 8.500h10" {...dot} /></Svg>
                  <CompLabel $sel $gap={6}><Gear /><Latin>MLC-2</Latin></CompLabel>
                </CompRow>
              </CompTree>
            </CompPane>
            <PropPane>
              <TabStrip><Tab>属性编辑</Tab></TabStrip>
              <GridFrame>
                <GridRow $head>
                  <Cell $bg="linear-gradient(#fafafa,#ececec)" />
                  <Cell $bg="linear-gradient(#fafafa,#ececec)" $center $head>属性名称</Cell>
                  <Cell $bg="linear-gradient(#fbdda0,#f2bd63)" $c="#800080" $center $head>属性值</Cell>
                  <Cell $bg="linear-gradient(#fafafa,#ececec)" $center $head>附加</Cell>
                </GridRow>
                {propRows.map((r) => (
                  <GridRow key={r.n}>
                    <Cell $center $bg={r.sel ? "#ffd58c" : "#f4f4f4"} $c={r.sel ? "#800080" : "#000"}><Latin>{r.n}</Latin></Cell>
                    <Cell $pl={r.plus ? 0 : 19} $bg={r.sel ? "#0078d7" : "#fff"} $c={r.sel ? "#fff" : r.plus ? "#888" : r.blue ? "#0000ff" : "#000"}>
                      {r.plus && <PlusBox>+</PlusBox>}
                      <span><Mx t={r.name} /></span>
                    </Cell>
                    <Cell $pl={2} $bg={r.sel ? "#d6e8f8" : "#fff"}>{r.val && <span><Mx t={r.val} /></span>}</Cell>
                    <Cell $center>{r.chk && <Check />}</Cell>
                  </GridRow>
                ))}
              </GridFrame>
            </PropPane>
          </Body>
        </RightCol>
      </Work>
      <StatusBar>
        <StatusCell $w={148} />
        <StatusCell $w={78}><Mx t="层高:4.5m" /></StatusCell>
        <StatusCell $w={98}><Mx t="底标高:-0.05m" /></StatusCell>
        <StatusCell $w={48}><Mx t="0" /></StatusCell>
        <StatusCell>名称在当前层当前构件类型下不允许重名</StatusCell>
        <StatusCell $w={69}><Mx t="263.7 FPS" /></StatusCell>
      </StatusBar>
      <Taskbar>
        <StartBtn><WinLogo /></StartBtn>
        <SearchBar>
          <Cortana />
          <SearchLabel>在这里输入你要搜索的内容</SearchLabel>
          <MicI />
        </SearchBar>
        <TaskSlot><TaskView /></TaskSlot>
        <TaskSlot><Fan /></TaskSlot>
        <TaskSlot><IE /></TaskSlot>
        <TaskSlot><Swirl /></TaskSlot>
        <TaskSlot $w={29}><Divider /></TaskSlot>
        <TaskSlot $active $w={41}><BlueG /></TaskSlot>
        <TaskSlot $w={8} />
        <TaskSlot $active $w={40}><NoteApp /></TaskSlot>
        <TaskSlot $w={9} />
        <TaskSlot $active $w={40}><BlueApp /></TaskSlot>
        <Tray>
          <TrayScroll $w={18}><UpTri /><DownTri /></TrayScroll>
          <TrayItem $w={18}><Divider /></TrayItem>
          <TrayItem $w={37}>链接</TrayItem>
          <TrayItem $w={52}><People /></TrayItem>
          <TrayItem $w={74}><span>30%</span><span>CPU使用</span></TrayItem>
          <TrayItem $w={24}><Chevron /></TrayItem>
          <TrayItem $w={26}><BellT /></TrayItem>
          <TrayItem $w={23}><Plug /></TrayItem>
          <TrayItem $w={24}><Wifi /></TrayItem>
          <TrayItem $w={21}><Speaker /></TrayItem>
          <TrayItem $w={36}><Kbd /></TrayItem>
          <TrayItem $w={23}>中</TrayItem>
          <TrayItem $w={32}><SgS /></TrayItem>
          <TrayItem $w={76}><span>20:28</span><span>2018/9/11</span></TrayItem>
          <TrayItem $w={52}>
            <NotifWrap><Notif /><NotifBadge>1</NotifBadge></NotifWrap>
          </TrayItem>
        </Tray>
      </Taskbar>

      <Badge>76</Badge>
      <ImeBar>
        <ImeZh>英</ImeZh>
        <ImeDot>’,</ImeDot>
        <S16><circle cx="8" cy="8" r="6.5" fill="none" stroke="#1f6fb8" strokeWidth="1.5" /><circle cx="5.8" cy="6.5" r="1" fill="#1f6fb8" /><circle cx="10.2" cy="6.5" r="1" fill="#1f6fb8" /><path d="M5 10c1.5 2 4.5 2 6 0" stroke="#1f6fb8" fill="none" /></S16>
        <S16><rect x="5.5" y="1" width="5" height="9" rx="2.5" fill="#1f6fb8" /><path d="M3 7c0 6 10 6 10 0M8 12v3" stroke="#1f6fb8" strokeWidth="1.2" fill="none" /></S16>
        <S16><rect x="1" y="3" width="14" height="11" rx="1" fill="#1f6fb8" /><path d="M3 6h10M3 8.5h10" stroke="#fff" strokeDasharray="1.5 1" /><path d="M5 11.5h6" stroke="#fff" /></S16>
        <S16><circle cx="6" cy="4.5" r="3" fill="#b4c2d0" /><path d="M1 14c0-4 2-5 5-5s4 1 4 5z" fill="#b4c2d0" /><rect x="8" y="9" width="7" height="5" fill="#eef3f7" stroke="#9db0c2" /></S16>
        <S16><path d="M4 2l2 1h4l2-1 4 3-2 3-1-1v8H3V7L2 8 0 5z" fill="#1f6fb8" /></S16>
        <S16><path d="M11 1a4 4 0 0 0-4 5L1 12c-1 2 1 4 3 3l6-6a4 4 0 0 0 5-5l-3 2-2-1-.5-2z" fill="#1f6fb8" /></S16>
      </ImeBar>
      <ImeLogo><SgS s={28} /></ImeLogo>
      <RedFrame $x={536} $y={123} $w={122} $h={198} />
      <RedFrame $x={18} $y={418} $w={118} $h={30} />
    </Page>
  );
}
